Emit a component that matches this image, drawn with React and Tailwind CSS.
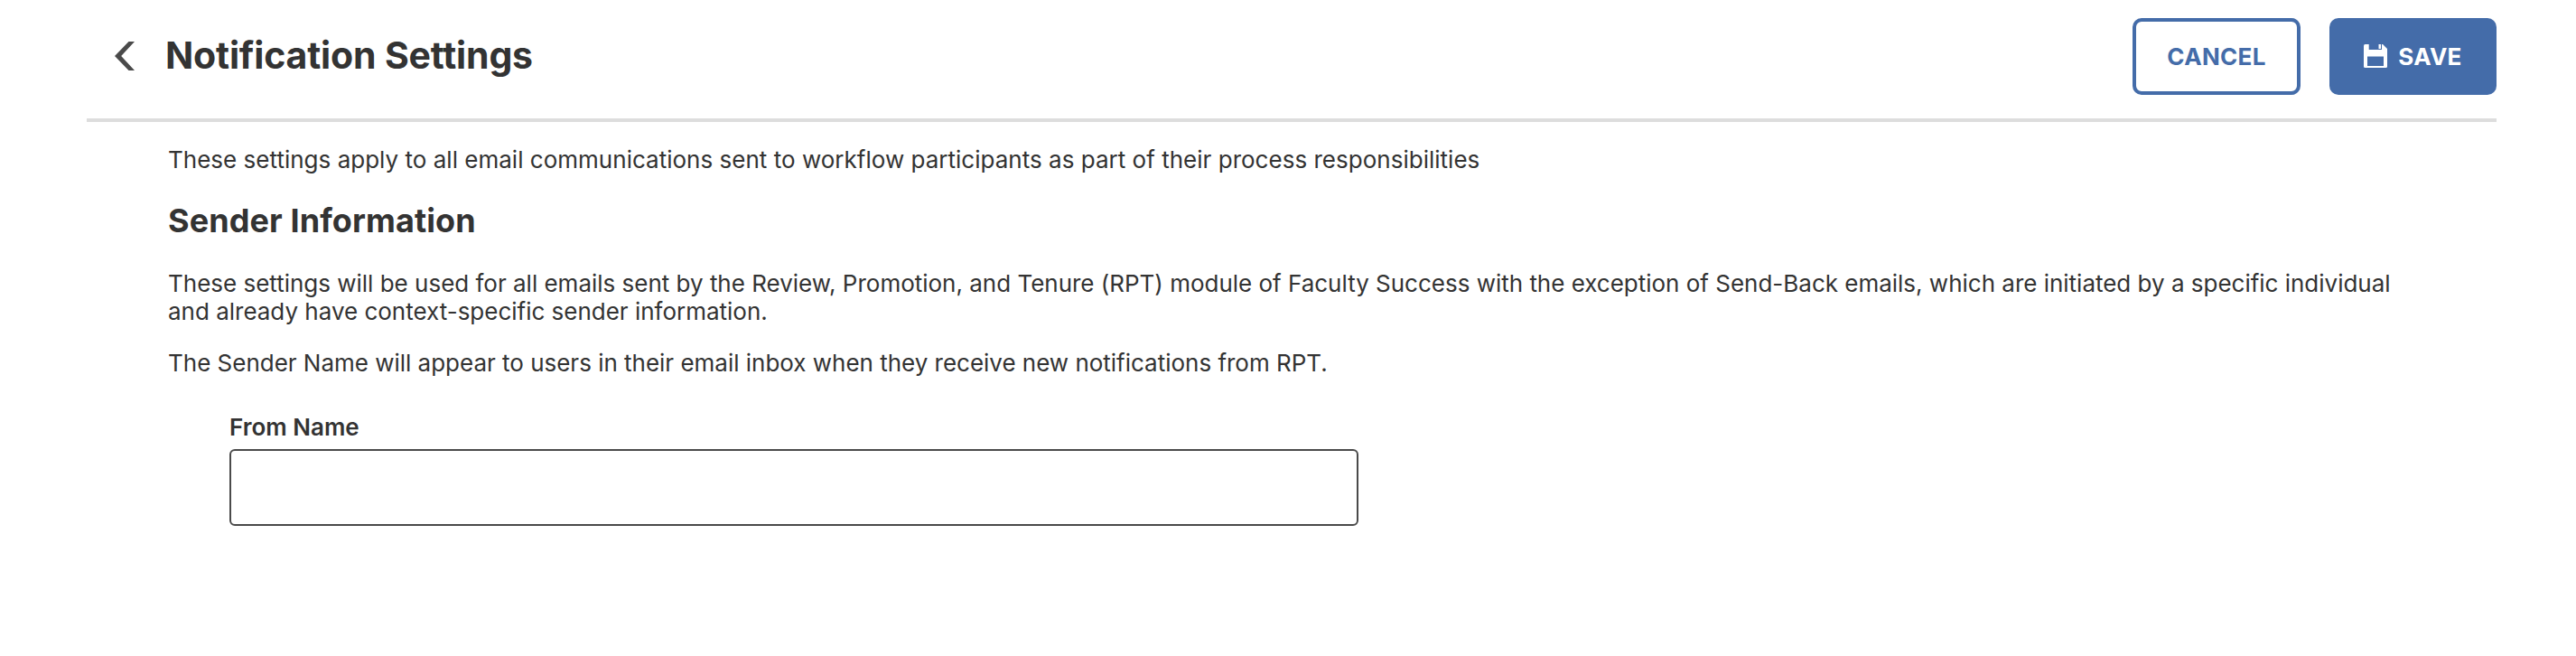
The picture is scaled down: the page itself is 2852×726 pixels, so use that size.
import React, { useState } from 'react';

function BackIcon() {
  return (
    <svg className="block" width="22" height="32" viewBox="0 0 22 32" fill="#4a4a4a">
      <path d="M15.5 0H22L7.2 16L22 32H15.5L0 16Z" />
    </svg>
  );
}

function SaveIcon() {
  return (
    <svg className="mb-px block shrink-0" width="26" height="26" viewBox="0 0 26 26" fill="none">
      <path d="M1.5 0H21L26 5V24.5Q26 26 24.5 26H1.5Q0 26 0 24.5V1.5Q0 0 1.5 0Z" fill="white" />
      <path d="M5.7 0H20V6H5.7Z" fill="#446ca9" />
      <path d="M16.5 0H19V5H16.5Z" fill="white" />
      <path d="M4 13.5H22V24H4Z" fill="#446ca9" />
    </svg>
  );
}

export default function App() {
  const [fromName, setFromName] = useState('');

  return (
    <div className="h-[726px] overflow-hidden bg-white pl-24 pr-[88px] font-['Inter',sans-serif] text-[26px] leading-[31px] text-[#333333]">
      {/* Header */}
      <header className="flex h-[135px] items-start justify-between border-b-4 border-[#dddddd] pt-5">
        <div className="flex h-[84px] items-center pl-[31px]">
          <button type="button" aria-label="Back">
            <BackIcon />
          </button>
          <h1 className="mb-0.5 ml-[34px] whitespace-nowrap text-[41px] leading-[50px] font-bold tracking-[-0.17px]">Notification Settings</h1>
        </div>
        <div className="flex gap-8 font-bold tracking-[0.3px]">
          <button type="button" className="h-[85px] w-[186px] rounded-[10px] border-4 border-[#446ca9] text-[#446ca9]">
            CANCEL
          </button>
          <button type="button" className="flex h-[85px] w-[185px] items-center justify-center gap-3 rounded-[10px] bg-[#446ca9] text-white">
            <SaveIcon />
            <span>SAVE</span>
          </button>
        </div>
      </header>

      {/* Content */}
      <main className="pl-[90px] pt-[26px]">
        <p className="whitespace-nowrap tracking-[0.015px]">
          These settings apply to all email communications sent to workflow participants as part of their process responsibilities
        </p>
        <h2 className="mt-[31px] text-[36px] leading-[43px] font-bold tracking-[0.1px]">Sender Information</h2>
        <p className="mt-8 whitespace-nowrap tracking-[-0.01px]">
          These settings will be used for all emails sent by the Review, Promotion, and Tenure (RPT) module of Faculty Success with the exception of Send-Back emails, which are initiated by a specific individual
          <br />
          and already have context-specific sender information.
        </p>
        <p className="mt-[26px] whitespace-nowrap tracking-[-0.015px]">
          The Sender Name will appear to users in their email inbox when they receive new notifications from RPT.
        </p>

        <div className="mt-10 flex flex-col pl-[68px]">
          <label htmlFor="from-name" className="font-semibold">From Name</label>
          <input
            id="from-name"
            type="text"
            value={fromName}
            onChange={(e) => setFromName(e.target.value)}
            className="mt-[9px] h-[85px] w-[1250px] rounded-md border-2 border-[#4a4a4a] px-4"
          />
        </div>
      </main>
    </div>
  );
}
